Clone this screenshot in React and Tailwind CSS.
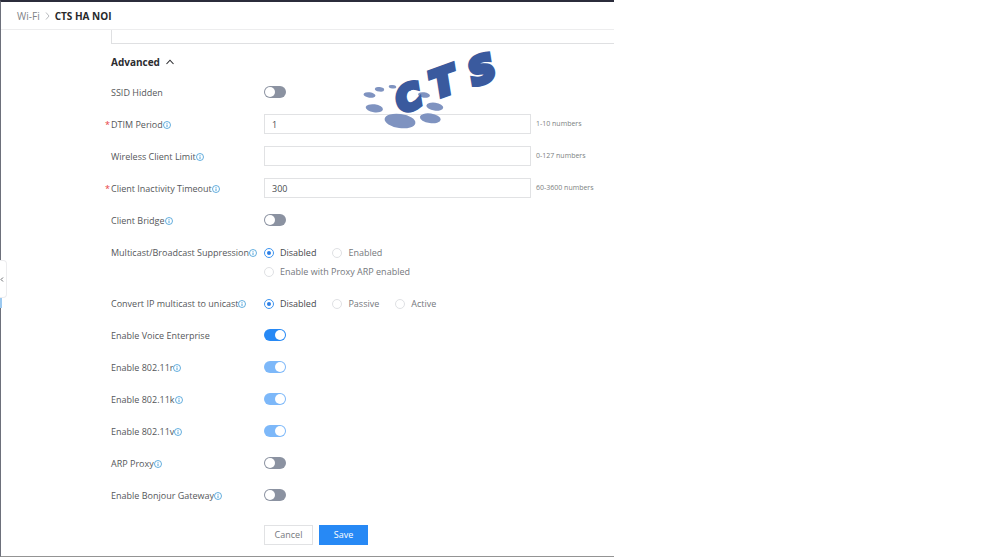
import React from "react";

function InfoIcon() {
  return (
    <svg viewBox="0 0 8 8" className="h-2 w-2 shrink-0 text-[#3d9ad6]" fill="none" stroke="currentColor" aria-hidden="true">
      <circle cx="4" cy="4" r="3.5" strokeWidth="0.8" />
      <path d="M4 3.5V6M4 2v0.8" strokeWidth="0.9" />
    </svg>
  );
}

function Label({ id, text, info, required }) {
  return (
    <div className="relative flex h-5 w-[153px] shrink-0 items-center pt-0.5 font-medium text-[#55575a]">
      {required && <span className="absolute right-full mr-px text-[#e84040]">*</span>}
      <label htmlFor={id} className="whitespace-nowrap">{text}</label>
      {info && <InfoIcon />}
    </div>
  );
}

function SwitchRow({ id, text, info, on, disabled }) {
  return (
    <div className="flex h-5 items-center">
      <Label id={id} text={text} info={info} />
      <span className="relative flex h-3 w-[22px]">
        <input
          id={id}
          type="checkbox"
          role="switch"
          defaultChecked={on}
          disabled={disabled}
          className="peer h-3 w-[22px] appearance-none rounded-full bg-[#8b92a1] checked:bg-[#2789f5] disabled:bg-[#7db8f9]"
        />
        <span className="pointer-events-none absolute top-px left-px h-2.5 w-2.5 rounded-full bg-white peer-checked:left-[11px]" />
      </span>
    </div>
  );
}

function FieldRow({ id, text, required, value, hint }) {
  return (
    <div className="flex h-5 items-center">
      <Label id={id} text={text} info required={required} />
      <input
        id={id}
        type="text"
        defaultValue={value}
        className="h-5 min-w-0 max-w-[267px] flex-1 border border-[#e1e2e4] bg-transparent px-[7px] text-[#4a4c50] outline-none"
      />
      <span className="ml-[5px] w-16 text-[7px] whitespace-nowrap text-[#7d7f82]">{hint}</span>
    </div>
  );
}

function Radio({ name, text, checked }) {
  return (
    <label className={`flex items-center gap-1.5 whitespace-nowrap ${checked ? "text-[#45474b]" : "text-[#75787d]"}`}>
      <input
        type="radio"
        name={name}
        defaultChecked={checked}
        className="grid h-2.5 w-2.5 appearance-none place-items-center rounded-full border border-[#dfe1e4] bg-white before:h-1 before:w-1 before:rounded-full checked:border-[#3d94f0] checked:before:bg-[#2d80e6]"
      />
      {text}
    </label>
  );
}

function Logo() {
  return (
    <svg
      viewBox="0 -20 170 105"
      className="pointer-events-none absolute top-[27px] left-[357px] h-[105px] w-[170px] overflow-visible"
      role="img"
      aria-label="CTS"
    >
      <g fill="#7f93c0">
        <ellipse cx="11.5" cy="46" rx="6" ry="2.7" transform="rotate(8 11.5 46)" />
        <ellipse cx="21.5" cy="40.3" rx="4.7" ry="2.2" transform="rotate(8 21.5 40.3)" />
        <ellipse cx="34.5" cy="37.8" rx="3.8" ry="1.7" transform="rotate(8 34.5 37.8)" />
        <ellipse cx="49" cy="40" rx="4.5" ry="2" transform="rotate(8 49 40)" />
        <ellipse cx="66" cy="46" rx="6" ry="2.7" transform="rotate(8 66 46)" />
        <ellipse cx="16.3" cy="59.3" rx="8.7" ry="4" transform="rotate(8 16.3 59.3)" />
        <ellipse cx="76.8" cy="57.6" rx="8.5" ry="4" transform="rotate(8 76.8 57.6)" />
        <ellipse cx="72.3" cy="69.3" rx="10.5" ry="4.8" transform="rotate(8 72.3 69.3)" />
        <ellipse cx="42" cy="72" rx="15.5" ry="7" transform="rotate(8 42 72)" />
      </g>
      <g
        className="font-['DejaVu_Sans','Liberation_Sans',sans-serif] font-bold italic"
        fill="#3a5a9e"
        stroke="#3a5a9e"
        strokeWidth="5"
      >
        <text fontSize="34" transform="translate(43 64) rotate(-20)">C</text>
        <text fontSize="36" transform="translate(78 49) rotate(-20)">T</text>
        <text fontSize="36" transform="translate(116 37) rotate(-20)">S</text>
      </g>
    </svg>
  );
}

export default function App() {
  return (
    <div className="min-h-screen bg-white font-['Open_Sans','Noto_Sans',sans-serif] text-[9px] leading-4">
      <div className="relative flex min-h-screen w-[62%] flex-col border-t-2 border-b border-l border-t-[#2b2c3b] border-b-[#949494] border-l-[#6d707b]">
        <header className="flex h-7 items-center border-b border-[#ededee] pl-4 text-[10px]">
          <nav aria-label="Breadcrumb" className="flex items-center">
            <a href="#wifi" className="text-[#808286]">Wi-Fi</a>
            <svg viewBox="0 0 5 8" className="mx-[5px] h-2 w-[5px]" fill="none" stroke="#b9bbbe" aria-hidden="true">
              <path d="M1 0.5L4 4L1 7.5" />
            </svg>
            <span className="font-bold text-[#27282b]">CTS HA NOI</span>
          </nav>
        </header>

        <main className="flex flex-1 flex-col pl-[110px]">
          <div className="h-3.5 border-b border-l border-[#dfe0e2]" />
          <button type="button" aria-expanded="true" className="mt-2.5 flex h-4 items-center self-start text-[10px] font-bold text-[#2b2c2f]">
            Advanced
            <svg viewBox="0 0 8 6" className="ml-1.5 h-1.5 w-2" fill="none" stroke="currentColor" strokeWidth="1.1" aria-hidden="true">
              <path d="M0.5 5L4 1.2L7.5 5" />
            </svg>
          </button>

          <form className="mt-3 flex flex-col gap-3" onSubmit={(e) => e.preventDefault()}>
            <SwitchRow id="ssid-hidden" text="SSID Hidden" />
            <FieldRow id="dtim" text="DTIM Period" required value="1" hint="1-10 numbers" />
            <FieldRow id="limit" text="Wireless Client Limit" value="" hint="0-127 numbers" />
            <FieldRow id="timeout" text="Client Inactivity Timeout" required value="300" hint="60-3600 numbers" />
            <SwitchRow id="bridge" text="Client Bridge" info />
            <div className="flex" role="radiogroup" aria-label="Multicast/Broadcast Suppression">
              <Label text="Multicast/Broadcast Suppression" info />
              <div>
                <div className="flex h-5 items-center gap-4 pt-0.5">
                  <Radio name="suppression" text="Disabled" checked />
                  <Radio name="suppression" text="Enabled" />
                </div>
                <div className="flex h-[19px] items-center">
                  <Radio name="suppression" text="Enable with Proxy ARP enabled" />
                </div>
              </div>
            </div>
            <div className="flex" role="radiogroup" aria-label="Convert IP multicast to unicast">
              <Label text="Convert IP multicast to unicast" info />
              <div className="flex h-5 items-center gap-4 pt-0.5">
                <Radio name="convert" text="Disabled" checked />
                <Radio name="convert" text="Passive" />
                <Radio name="convert" text="Active" />
              </div>
            </div>
            <SwitchRow id="voice" text="Enable Voice Enterprise" on />
            <SwitchRow id="r" text="Enable 802.11r" info on disabled />
            <SwitchRow id="k" text="Enable 802.11k" info on disabled />
            <SwitchRow id="v" text="Enable 802.11v" info on disabled />
            <SwitchRow id="arp" text="ARP Proxy" info />
            <SwitchRow id="bonjour" text="Enable Bonjour Gateway" info />
            <div className="mt-2 flex gap-1.5 pl-[153px]">
              <button type="button" className="h-5 w-[49px] border border-[#e1e2e4] bg-white text-[#75787d]">Cancel</button>
              <button type="submit" className="h-5 w-[49px] bg-[#2789f5] font-medium text-white">Save</button>
            </div>
          </form>
        </main>

        <div className="absolute top-[296px] -left-px h-2.5 w-0.5 bg-[#9cc9f0]" />
        <button
          type="button"
          aria-label="Collapse panel"
          className="absolute top-[258px] -left-px flex h-[38px] w-[7px] items-center rounded-r border border-l-0 border-[#ececee] bg-white"
        >
          <svg viewBox="0 0 4 5" className="h-[5px] w-1" fill="none" stroke="#6b6d70" aria-hidden="true">
            <path d="M3 0.5L1 2.5L3 4.5" />
          </svg>
        </button>
        <Logo />
      </div>
    </div>
  );
}
